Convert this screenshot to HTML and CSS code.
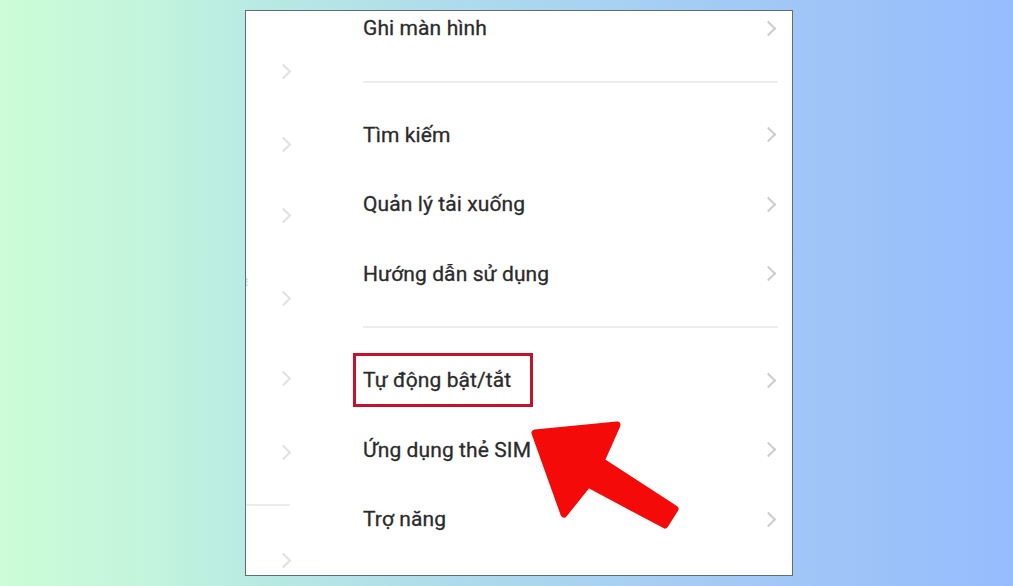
FILE: index.html
```html
<!DOCTYPE html>
<html lang="vi">
<head>
<meta charset="utf-8">
<title>Cài đặt</title>
<link rel="stylesheet" href="styles.css">
</head>
<body>
<div class="stage">
  <div class="panel">
    <div class="ghost">
      <span class="gchev g1"></span>
      <span class="gchev g2"></span>
      <span class="gchev g3"></span>
      <span class="gmark">ŧ</span>
      <span class="gchev g4"></span>
      <span class="gchev g5"></span>
      <span class="gchev g6"></span>
      <span class="gline"></span>
      <span class="gchev g7"></span>
    </div>
    <div class="menu">
      <div class="row first"><span class="label">Ghi màn hình</span><span class="chev"></span></div>
      <div class="sep"><span class="line"></span></div>
      <div class="row"><span class="label">Tìm kiếm</span><span class="chev"></span></div>
      <div class="row"><span class="label">Quản lý tải xuống</span><span class="chev"></span></div>
      <div class="row"><span class="label">Hướng dẫn sử dụng</span><span class="chev"></span></div>
      <div class="sep"><span class="line"></span></div>
      <div class="row"><span class="label marked">Tự động bật/tắt<span class="mark-box"></span></span><span class="chev"></span></div>
      <div class="row"><span class="label">Ứng dụng thẻ SIM</span><span class="chev"></span></div>
      <div class="row"><span class="label">Trợ năng</span><span class="chev"></span></div>
    </div>
  </div>
  <svg class="arrow" viewBox="525 415 160 120" width="160" height="120" aria-hidden="true">
    <polygon points="535,433 617,425 601,461 675,509 665,525 588,484 564,514" fill="#f50a0a" stroke="#f50a0a" stroke-width="7" stroke-linejoin="round"/>
  </svg>
</div>
</body>
</html>
```

FILE: styles.css
```css
html, body {
  margin: 0;
  padding: 0;
}

body {
  width: 1013px;
  height: 586px;
  overflow: hidden;
  background: linear-gradient(90deg, #ccfdd7 0%, #c3f4dd 15%, #b8ebe2 25%, #aedbec 45%, #a2c8f6 75%, #96bcfd 100%);
  font-family: Roboto, "Noto Sans", "Liberation Sans", sans-serif;
}

.stage {
  position: relative;
  width: 1013px;
  height: 586px;
  padding-top: 10px;
  box-sizing: border-box;
}

.panel {
  margin-left: 245px;
  width: 548px;
  height: 566px;
  box-sizing: border-box;
  border: 1.5px solid #5f6e76;
  background: #ffffff;
  display: flex;
  overflow: hidden;
}

.ghost {
  width: 117px;
  flex: none;
  display: flex;
  flex-direction: column;
  position: relative;
}

.gchev {
  display: block;
  width: 9px;
  height: 9px;
  margin-left: 32px;
  border-right: 2px solid #e2e2e2;
  border-top: 2px solid #e2e2e2;
  transform: rotate(45deg);
}

.g1 { margin-top: 55px; }
.g2 { margin-top: 62px; }
.g3 { margin-top: 60px; }
.gmark {
  margin-top: 55px;
  margin-left: -2px;
  height: 12px;
  line-height: 12px;
  font-size: 13px;
  color: #d4d4d4;
}
.g4 { margin-top: 5px; }
.g5 { margin-top: 69px; }
.g6 { margin-top: 63px; }
.gline {
  display: block;
  margin-top: 46px;
  width: 44px;
  height: 1.5px;
  background: #ececec;
}
.g7 { margin-top: 49px; }

.menu {
  width: 417px;
  flex: none;
  display: flex;
  flex-direction: column;
}

.row {
  height: 69.5px;
  flex: none;
  display: flex;
  align-items: center;
  justify-content: space-between;
}

.row.first {
  margin-top: -18px;
  height: 70px;
}

.label {
  font-size: 21px;
  color: #2b2b2b;
  letter-spacing: 0.1px;
  -webkit-text-stroke: 0.3px #2b2b2b;
}

.chev {
  display: block;
  width: 9px;
  height: 9px;
  margin-right: 6px;
  border-right: 2px solid #cdcdcd;
  border-top: 2px solid #cdcdcd;
  transform: rotate(45deg);
}

.sep {
  height: 37px;
  flex: none;
  display: flex;
  align-items: center;
}

.sep .line {
  display: block;
  width: 415px;
  height: 2px;
  background: #ededed;
}

.marked {
  position: relative;
}

.mark-box {
  position: absolute;
  left: -10px;
  top: 50%;
  margin-top: -27px;
  width: 180px;
  height: 54px;
  box-sizing: border-box;
  border: 3.5px solid #c4122b;
}

.arrow {
  position: absolute;
  left: 525px;
  top: 415px;
}
```
